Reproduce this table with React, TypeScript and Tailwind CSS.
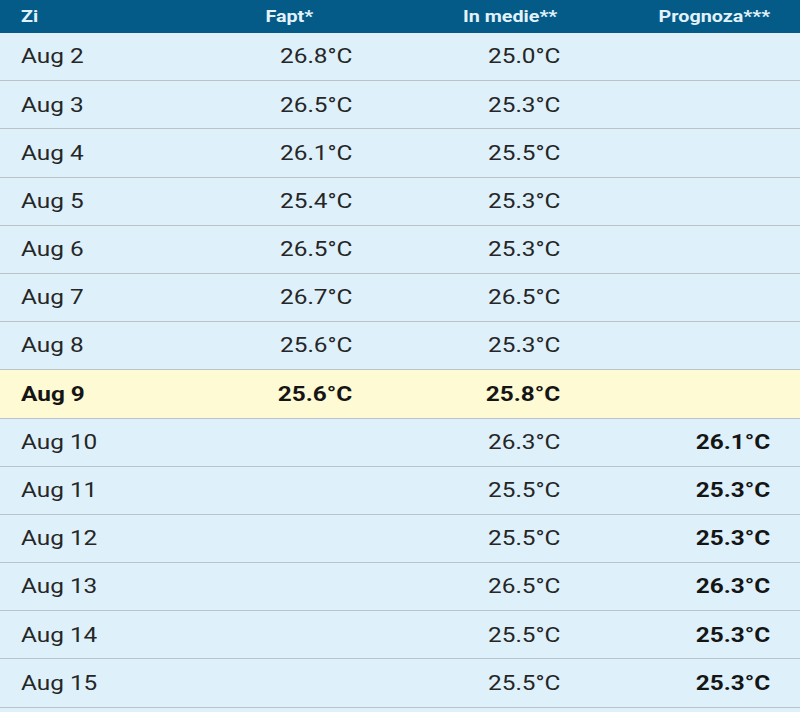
type Row = {
    day: string
    fact?: string
    avg: string
    forecast?: string
    today?: boolean
}

const rows: Row[] = [
    { day: "Aug 2", fact: "26.8°C", avg: "25.0°C" },
    { day: "Aug 3", fact: "26.5°C", avg: "25.3°C" },
    { day: "Aug 4", fact: "26.1°C", avg: "25.5°C" },
    { day: "Aug 5", fact: "25.4°C", avg: "25.3°C" },
    { day: "Aug 6", fact: "26.5°C", avg: "25.3°C" },
    { day: "Aug 7", fact: "26.7°C", avg: "26.5°C" },
    { day: "Aug 8", fact: "25.6°C", avg: "25.3°C" },
    { day: "Aug 9", fact: "25.6°C", avg: "25.8°C", today: true },
    { day: "Aug 10", avg: "26.3°C", forecast: "26.1°C" },
    { day: "Aug 11", avg: "25.5°C", forecast: "25.3°C" },
    { day: "Aug 12", avg: "25.5°C", forecast: "25.3°C" },
    { day: "Aug 13", avg: "26.5°C", forecast: "26.3°C" },
    { day: "Aug 14", avg: "25.5°C", forecast: "25.3°C" },
    { day: "Aug 15", avg: "25.5°C", forecast: "25.3°C" },
]

// the screenshot is a little stretched sideways, so the text is widened to match
function L({ children }: { children?: string }) {
    return <span className="inline-block origin-left scale-x-[1.16]">{children}</span>
}

function R({ children }: { children?: string }) {
    return <span className="inline-block origin-right scale-x-[1.16]">{children}</span>
}

export default function App() {
    return (
        <div className="w-[800px] h-[712px] bg-[#def1fb] font-['Roboto','Liberation_Sans',sans-serif] overflow-hidden">
            <div className="grid grid-cols-[240px_140px_200px_220px] h-[33px] items-center bg-[#045b88] text-[17px] font-bold text-[#e2f2fa]">
                <div className="pl-[21px]"><L>Zi</L></div>
                <div className="text-right pr-[67px]"><R>Fapt*</R></div>
                <div className="text-right pr-[23px]"><R>In medie**</R></div>
                <div className="text-right pr-[30px]"><R>Prognoza***</R></div>
            </div>
            {rows.map((r) => (
                <div
                    key={r.day}
                    className={
                        r.today
                            ? "grid grid-cols-[240px_140px_200px_220px] h-[48.2px] items-center border-b border-[#b9c3c9] bg-[#fefad3] text-[21px] font-bold text-[#151515]"
                            : "grid grid-cols-[240px_140px_200px_220px] h-[48.2px] items-center border-b border-[#b9c3c9] text-[21px] text-[#262626]"
                    }
                >
                    <div className="pl-[21px] pt-[1px]"><L>{r.day}</L></div>
                    <div className="text-right pr-[28px] pt-[1px]"><R>{r.fact}</R></div>
                    <div className="text-right pr-[20px] pt-[1px]"><R>{r.avg}</R></div>
                    <div className="text-right pr-[30px] pt-[1px] font-bold text-[#151515]"><R>{r.forecast}</R></div>
                </div>
            ))}
        </div>
    )
}
